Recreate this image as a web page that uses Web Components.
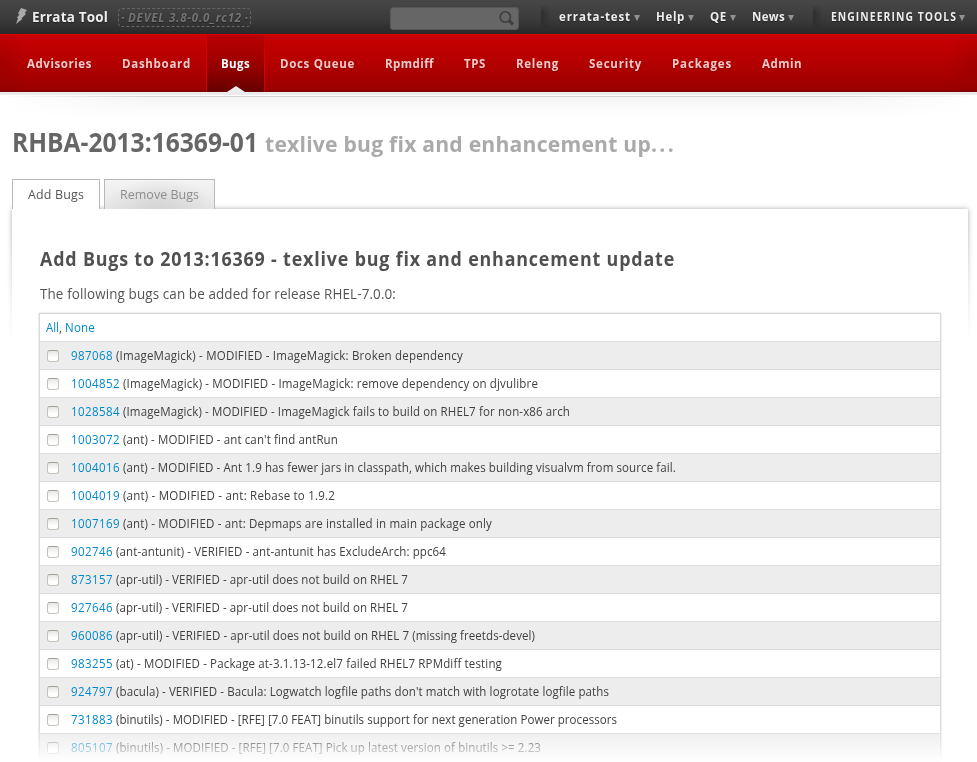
<!DOCTYPE html>
<html lang="en"><head><meta charset="utf-8"><title>Errata Tool</title>
<style>html,body{margin:0;background:#fff}body{width:977px;height:762px;overflow:hidden;font-family:"Open Sans","Noto Sans",sans-serif;color:#444}</style></head><body>
<errata-page></errata-page>
<script>
/* A single line of slightly narrowed text, tracked so that it fills its width attribute. */
class TextRun extends HTMLElement{
 connectedCallback(){
  const r=this.attachShadow({mode:'open'});
  r.innerHTML='<style>:host{display:block;flex:none;white-space:pre;font-kerning:none;font-variant-ligatures:none}span{display:inline-block;transform-origin:0 50%}</style><span><slot></slot></span>';
  const w=+this.getAttribute('w'),s=r.querySelector('span');
  this.style.width=w+'px';
  const n=this.textContent.length,natural=s.getBoundingClientRect().width;
  const k=Math.min(+this.getAttribute('k')||.96,w/natural);
  s.style.letterSpacing=((w/k-natural)/n).toFixed(3)+'px';
  s.style.transform='scaleX('+k.toFixed(4)+')';
 }
}
class TopBar extends HTMLElement{
 connectedCallback(){
  this.attachShadow({mode:'open'}).innerHTML=`<style>
:host{display:flex;height:34px;box-sizing:border-box;background:linear-gradient(#474747,#3b3b3b 55%,#292929);color:#eee;font-weight:700;font-size:12px;line-height:34px;text-shadow:0 1px 1px #222;padding-left:15px}
svg{display:block;flex:none}.bolt{margin:8px 5px 0 0}
.brand{font-size:14px;color:#eee}
.ver{margin:8px 0 0 10px;box-sizing:border-box;width:133px;height:19px;border:1px dashed #666;border-radius:4px;display:flex;justify-content:space-between;padding:0 2px;font-style:italic;font-size:12px;line-height:17px;color:#747474}
.search{margin:7px 0 0 139px;width:129px;height:23px;box-sizing:border-box;border:1px solid #575757;border-radius:3px;background:#666;display:flex;justify-content:flex-end;padding:2px 3px 0 0}
.sep{width:10px;height:24px;margin-top:5px;background:linear-gradient(90deg,#2228,transparent);-webkit-mask:linear-gradient(transparent,#000 30%,#000 70%,transparent)}
.item{display:flex;gap:2px}.item i{width:0;height:0;border:3px solid transparent;border-top:6px solid #929292;border-bottom:0;margin-top:15px;margin-left:1px}
</style>
<svg class="bolt" width="12" height="17" viewBox="0 0 12 17"><path d="M6 0 12 2 9.7 5 11 6 6.6 10.3 7.3 11 1 16 3 10.4 2 9.5 4.5 6.2 3 5.6Z" fill="#aaa"/></svg>
<text-run class="brand" w="76">Errata Tool</text-run>
<div class="ver"><span>·</span><text-run w="114">DEVEL 3.8-0.0_rc12</text-run><span>·</span></div>
<div class="search"><svg width="17" height="17" viewBox="0 0 17 17"><circle cx="7.3" cy="7" r="5.2" fill="none" stroke="#3e3e3e" stroke-width="1.6"/><path d="m11 10.7 4 3.6" stroke="#3e3e3e" stroke-width="3"/></svg></div>
<div class="sep" style="margin-left:22px"></div>
<div class="item" style="margin-left:8px"><text-run w="72">errata-test</text-run><i></i></div>
<div class="item" style="margin-left:16px"><text-run w="29">Help</text-run><i></i></div>
<div class="item" style="margin-left:16px"><text-run w="17">QE</text-run><i></i></div>
<div class="item" style="margin-left:16px"><text-run w="33">News</text-run><i></i></div>
<div class="sep" style="margin-left:19px"></div>
<div class="item" style="margin-left:8px"><text-run w="126" k=".86">ENGINEERING TOOLS</text-run><i style="margin-left:0"></i></div>`;
 }
}
class NavBar extends HTMLElement{
 connectedCallback(){
  const items=[['Advisories',65],['Dashboard',69],['Bugs',29],['Docs Queue',75],['Rpmdiff',49],['TPS',22],['Releng',43],['Security',53],['Packages',60],['Admin',40]];
  this.attachShadow({mode:'open'}).innerHTML=`<style>
:host{display:block;height:84px;background:#fff}
nav{display:flex;height:58px;box-sizing:border-box;padding-left:12px;border-top:1px solid #e00000;background:radial-gradient(ellipse 30px 40px at 0 50%,#7004,transparent),radial-gradient(ellipse 30px 40px at 100% 50%,#7004,transparent),linear-gradient(#c80000,#b60000 45%,#9b0000 95%,#7d0000);font-weight:700;font-size:12px;line-height:57px;color:#f5c9c9;text-shadow:0 1px 1px #800}
div{padding:0 15px}
.on{position:relative;color:#fff;background:linear-gradient(#b80000,#a00000 45%,#670000);}
.on::before,.on::after{content:"";position:absolute;top:0;bottom:0;width:1px;left:0;background:linear-gradient(#c80000,#e00000 60%,#c80000)}.on::after{left:auto;right:0}
.on svg{position:absolute;left:50%;bottom:0;margin-left:-9px}
.band{height:3px;padding:0;background:#ecebec;border-bottom:1px solid #fff}
.shade{height:22px;padding:0;background:linear-gradient(90deg,#fff,transparent 15%,transparent 85%,#fff),linear-gradient(#d4d4d4 1px,#f5f5f5 1px,#fff)}
</style><nav>${items.map(([t,w])=>`<div class="${t=='Bugs'?'on':''}"><text-run w="${w}">${t}</text-run>${t=='Bugs'?'<svg width="18" height="6"><path d="M0 6 9 0l9 6Z" fill="#eee"/></svg>':''}</div>`).join('')}</nav><div class="band"></div><div class="shade"></div>`;
 }
}
class TabStrip extends HTMLElement{
 connectedCallback(){
  this.attachShadow({mode:'open'}).innerHTML=`<style>
:host{display:flex;gap:4px;height:30px;padding-left:12px;position:relative;z-index:1;font-size:13px;line-height:29px}
div{box-sizing:border-box;height:30px;border:1px solid #b8b8b8;border-bottom:0;padding-left:15px}
.a{width:88px;background:#fff;color:#555}.b{width:111px;background:radial-gradient(ellipse at 50% 110%,#d2d2d2,transparent 75%),linear-gradient(#f4f4f4,#e6e6e6);color:#8c8c8c}
</style><div class="a"><text-run w="56">Add Bugs</text-run></div><div class="b"><text-run w="79">Remove Bugs</text-run></div>`;
 }
}
class BugRow extends HTMLElement{
 connectedCallback(){
  const id=this.getAttribute('bug'),w=this.getAttribute('w');
  this.attachShadow({mode:'open'}).innerHTML=`<style>
:host{display:flex;height:28px;box-sizing:border-box;border-bottom:1px solid #dcdcdc;padding-left:7px;font-size:12px;line-height:28px;color:#404040}
:host(:nth-of-type(odd)){background:#ededed}
input{appearance:none;flex:none;box-sizing:border-box;width:12px;height:12px;margin:8px 12px 0 0;border:1px solid #c0c3b9;border-top-color:#9da196;border-radius:3px;background:linear-gradient(#e6e6e4,#fff 70%)}
.id{color:#0088ce;margin-right:3px}</style><input type="checkbox"><text-run class="id" w="${id.length*7}">${id}</text-run><text-run w="${w}"></text-run>`.replace('></text-run>','>'+this.textContent.replace('>=','&gt;=')+'</text-run>');
 }
}
class BugTable extends HTMLElement{
 connectedCallback(){
  const rows=[
['987068','(ImageMagick) - MODIFIED - ImageMagick: Broken dependency',463],
['1004852','(ImageMagick) - MODIFIED - ImageMagick: remove dependency on djvulibre',538],
['1028584','(ImageMagick) - MODIFIED - ImageMagick fails to build on RHEL7 for non-x86 arch',570],
['1003072',"(ant) - MODIFIED - ant can't find antRun",338],
['1004016','(ant) - MODIFIED - Ant 1.9 has fewer jars in classpath, which makes building visualvm from source fail.',676],
['1004019','(ant) - MODIFIED - ant: Rebase to 1.9.2',335],
['1007169','(ant) - MODIFIED - ant: Depmaps are installed in main package only',492],
['902746','(ant-antunit) - VERIFIED - ant-antunit has ExcludeArch: ppc64',446],
['873157','(apr-util) - VERIFIED - apr-util does not build on RHEL 7',408],
['927646','(apr-util) - VERIFIED - apr-util does not build on RHEL 7',408],
['960086','(apr-util) - VERIFIED - apr-util does not build on RHEL 7 (missing freetds-devel)',535],
['983255','(at) - MODIFIED - Package at-3.1.13-12.el7 failed RHEL7 RPMdiff testing',502],
['924797',"(bacula) - VERIFIED - Bacula: Logwatch logfile paths don't match with logrotate logfile paths",609],
['731883','(binutils) - MODIFIED - [RFE] [7.0 FEAT] binutils support for next generation Power processors',617],
['805107','(binutils) - MODIFIED - [RFE] [7.0 FEAT] Pick up latest version of binutils >= 2.23',541]];
  this.attachShadow({mode:'open'}).innerHTML=`<style>
:host{display:block;width:900px;margin-left:28px;box-shadow:0 0 0 1px #dadada,0 0 2px 1px #ccc;background:#fff}
header{display:flex;height:28px;box-sizing:border-box;border-bottom:1px solid #dcdcdc;padding-left:6px;font-size:12px;line-height:28px}
.l{color:#0088ce}</style><header><text-run class="l" w="13">All</text-run><text-run w="6">, </text-run><text-run class="l" w="30">None</text-run></header>${rows.map(([i,t,e])=>`<bug-row bug="${i}" w="${e-74-i.length*7}">${t.replace('>=','&gt;=')}</bug-row>`).join('')}`;
 }
}
class ErrataPage extends HTMLElement{
 connectedCallback(){
  this.attachShadow({mode:'open'}).innerHTML=`<style>
:host{display:block;position:relative;height:762px;overflow:hidden}
.title{display:flex;align-items:baseline;height:61px;padding-left:12px;line-height:48px;font-weight:700}
.panel{position:relative;margin-left:12px;width:956px;height:553px;background:#fff}
.halo{position:absolute;inset:-8px -8px 0;overflow:hidden;-webkit-mask:linear-gradient(#000 30px,transparent 140px)}
.halo::before{content:"";position:absolute;inset:8px 8px -20px;box-shadow:0 0 5px #aaa}
.body{position:relative;background:#fff;height:553px}
h2{margin:0;padding:32px 0 0 28px;font-size:19px;line-height:36px;color:#505050}
p{margin:0;padding:5px 0 0 28px;font-size:14px;line-height:24px;height:31px;color:#555;box-sizing:border-box;margin-bottom:6px}
.fade{position:absolute;bottom:0;left:0;right:0;height:34px;background:linear-gradient(#fff0,#fff8 55%,#fff)}
</style><top-bar></top-bar><nav-bar></nav-bar>
<div class="title"><text-run w="246" style="font-size:26px;color:#666;margin-right:7px">RHBA-2013:16369-01</text-run><text-run w="386" style="font-size:22px;color:#aaa">texlive bug fix and enhancement up</text-run><text-run w="25" style="font-size:22px;color:#aaa">...</text-run></div>
<tab-strip></tab-strip>
<div class="panel"><div class="halo"></div><div class="body"><h2><text-run w="635" k=".94">Add Bugs to 2013:16369 - texlive bug fix and enhancement update</text-run></h2><p><text-run w="356">The following bugs can be added for release RHEL-7.0.0:</text-run></p><bug-table></bug-table></div></div><div class="fade"></div>`;
 }
}
for(const [n,c] of [['text-run',TextRun],['top-bar',TopBar],['nav-bar',NavBar],['tab-strip',TabStrip],['bug-row',BugRow],['bug-table',BugTable],['errata-page',ErrataPage]])customElements.define(n,c);
</script></body></html>
